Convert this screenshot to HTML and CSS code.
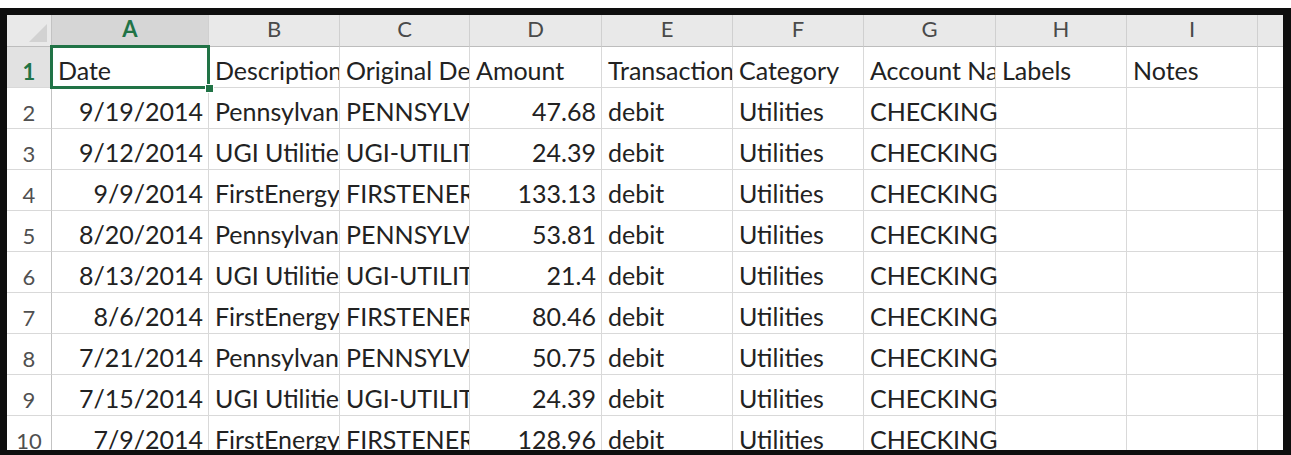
FILE: index.html
```html
<!DOCTYPE html>
<html lang="en">
<head>
<meta charset="utf-8">
<title>Transactions</title>
<link rel="stylesheet" href="styles.css">
</head>
<body>
<div class="frame">
  <div class="sheet">
    <!-- column headers -->
    <div class="corner"><span class="tri"></span></div>
    <div class="colhead active">A</div>
    <div class="colhead">B</div>
    <div class="colhead">C</div>
    <div class="colhead">D</div>
    <div class="colhead">E</div>
    <div class="colhead">F</div>
    <div class="colhead">G</div>
    <div class="colhead">H</div>
    <div class="colhead">I</div>
    <div class="colhead last"></div>

    <!-- row 1 -->
    <div class="rowhead active">1</div>
    <div class="cell current">Date<span class="selection"><span class="handle"></span></span></div>
    <div class="cell">Description</div>
    <div class="cell">Original Description</div>
    <div class="cell">Amount</div>
    <div class="cell">Transaction Type</div>
    <div class="cell">Category</div>
    <div class="cell">Account Name</div>
    <div class="cell">Labels</div>
    <div class="cell">Notes</div>
    <div class="cell last"></div>

    <div class="rowhead">2</div>
    <div class="cell num">9/19/2014</div>
    <div class="cell">Pennsylvania Power &amp; Light</div>
    <div class="cell">PENNSYLVANIA POWER</div>
    <div class="cell num">47.68</div>
    <div class="cell">debit</div>
    <div class="cell">Utilities</div>
    <div class="cell spill">CHECKING</div>
    <div class="cell"></div>
    <div class="cell"></div>
    <div class="cell last"></div>

    <div class="rowhead">3</div>
    <div class="cell num">9/12/2014</div>
    <div class="cell">UGI Utilities</div>
    <div class="cell">UGI-UTILITIES</div>
    <div class="cell num">24.39</div>
    <div class="cell">debit</div>
    <div class="cell">Utilities</div>
    <div class="cell spill">CHECKING</div>
    <div class="cell"></div>
    <div class="cell"></div>
    <div class="cell last"></div>

    <div class="rowhead">4</div>
    <div class="cell num">9/9/2014</div>
    <div class="cell">FirstEnergy</div>
    <div class="cell">FIRSTENERGY</div>
    <div class="cell num">133.13</div>
    <div class="cell">debit</div>
    <div class="cell">Utilities</div>
    <div class="cell spill">CHECKING</div>
    <div class="cell"></div>
    <div class="cell"></div>
    <div class="cell last"></div>

    <div class="rowhead">5</div>
    <div class="cell num">8/20/2014</div>
    <div class="cell">Pennsylvania Power &amp; Light</div>
    <div class="cell">PENNSYLVANIA POWER</div>
    <div class="cell num">53.81</div>
    <div class="cell">debit</div>
    <div class="cell">Utilities</div>
    <div class="cell spill">CHECKING</div>
    <div class="cell"></div>
    <div class="cell"></div>
    <div class="cell last"></div>

    <div class="rowhead">6</div>
    <div class="cell num">8/13/2014</div>
    <div class="cell">UGI Utilities</div>
    <div class="cell">UGI-UTILITIES</div>
    <div class="cell num">21.4</div>
    <div class="cell">debit</div>
    <div class="cell">Utilities</div>
    <div class="cell spill">CHECKING</div>
    <div class="cell"></div>
    <div class="cell"></div>
    <div class="cell last"></div>

    <div class="rowhead">7</div>
    <div class="cell num">8/6/2014</div>
    <div class="cell">FirstEnergy</div>
    <div class="cell">FIRSTENERGY</div>
    <div class="cell num">80.46</div>
    <div class="cell">debit</div>
    <div class="cell">Utilities</div>
    <div class="cell spill">CHECKING</div>
    <div class="cell"></div>
    <div class="cell"></div>
    <div class="cell last"></div>

    <div class="rowhead">8</div>
    <div class="cell num">7/21/2014</div>
    <div class="cell">Pennsylvania Power &amp; Light</div>
    <div class="cell">PENNSYLVANIA POWER</div>
    <div class="cell num">50.75</div>
    <div class="cell">debit</div>
    <div class="cell">Utilities</div>
    <div class="cell spill">CHECKING</div>
    <div class="cell"></div>
    <div class="cell"></div>
    <div class="cell last"></div>

    <div class="rowhead">9</div>
    <div class="cell num">7/15/2014</div>
    <div class="cell">UGI Utilities</div>
    <div class="cell">UGI-UTILITIES</div>
    <div class="cell num">24.39</div>
    <div class="cell">debit</div>
    <div class="cell">Utilities</div>
    <div class="cell spill">CHECKING</div>
    <div class="cell"></div>
    <div class="cell"></div>
    <div class="cell last"></div>

    <div class="rowhead">10</div>
    <div class="cell num">7/9/2014</div>
    <div class="cell">FirstEnergy</div>
    <div class="cell">FIRSTENERGY</div>
    <div class="cell num">128.96</div>
    <div class="cell">debit</div>
    <div class="cell">Utilities</div>
    <div class="cell spill">CHECKING</div>
    <div class="cell"></div>
    <div class="cell"></div>
    <div class="cell last"></div>
  </div>
</div>
</body>
</html>
```

FILE: styles.css
```css
* {
  box-sizing: border-box;
}

html, body {
  margin: 0;
  background: #ffffff;
}

/* dark window edge around the worksheet */
.frame {
  margin-top: 8px;
  height: 447px;
  border-style: solid;
  border-color: #0e0e0e;
  border-width: 7px 8px 5px 7px;
  background: #ffffff;
  overflow: hidden;
}

.sheet {
  display: grid;
  grid-template-columns: 45px 157px 131px 130px 132px 131px 131px 132px 131px 131px 25px;
  grid-template-rows: 32px;
  grid-auto-rows: 41px;
  font-family: Lato, "Open Sans", sans-serif;
  color: #222222;
}

/* headers */
.corner {
  position: relative;
  background: #e9e9e9;
  border-right: 1px solid #c3c3c3;
  border-bottom: 1px solid #bdbdbd;
}

.tri {
  position: absolute;
  right: 4px;
  bottom: 4px;
  width: 18px;
  height: 18px;
  background: #d2d2d2;
  clip-path: polygon(100% 0, 100% 100%, 0 100%);
}

.colhead {
  background: #e9e9e9;
  border-right: 1px solid #d0d0d0;
  border-bottom: 1px solid #bdbdbd;
  font-size: 22px;
  line-height: 27px;
  text-align: center;
  color: #4a4a4a;
}

.colhead.active {
  background: #d6d6d6;
  color: #217346;
  font-weight: 700;
}

.colhead.last {
  border-right: 0;
}

.rowhead {
  border-right: 1px solid #c3c3c3;
  border-bottom: 1px solid #d9d9d9;
  font-size: 22px;
  line-height: 27px;
  padding-top: 11px;
  text-align: center;
  color: #505050;
}

.rowhead.active {
  background: #e2e2e2;
  color: #217346;
  font-weight: 700;
}

/* cells */
.cell {
  border-right: 1px solid #d9d9d9;
  border-bottom: 1px solid #d9d9d9;
  font-size: 25px;
  line-height: 30px;
  padding: 8px 0 0 6px;
  white-space: nowrap;
  overflow: hidden;
}

.cell.num {
  text-align: right;
  padding-right: 5px;
}

.cell.spill,
.cell.current {
  overflow: visible;
}

.cell.current {
  position: relative;
}

.cell.last {
  border-right: 0;
}

/* active cell outline drawn over A1 */
.selection {
  position: absolute;
  left: -2px;
  top: -2px;
  right: -2px;
  bottom: -2px;
  border: 3px solid #217346;
  pointer-events: none;
}

.handle {
  position: absolute;
  right: -7px;
  bottom: -7px;
  width: 9px;
  height: 9px;
  background: #217346;
  border: 1px solid #ffffff;
}
```
